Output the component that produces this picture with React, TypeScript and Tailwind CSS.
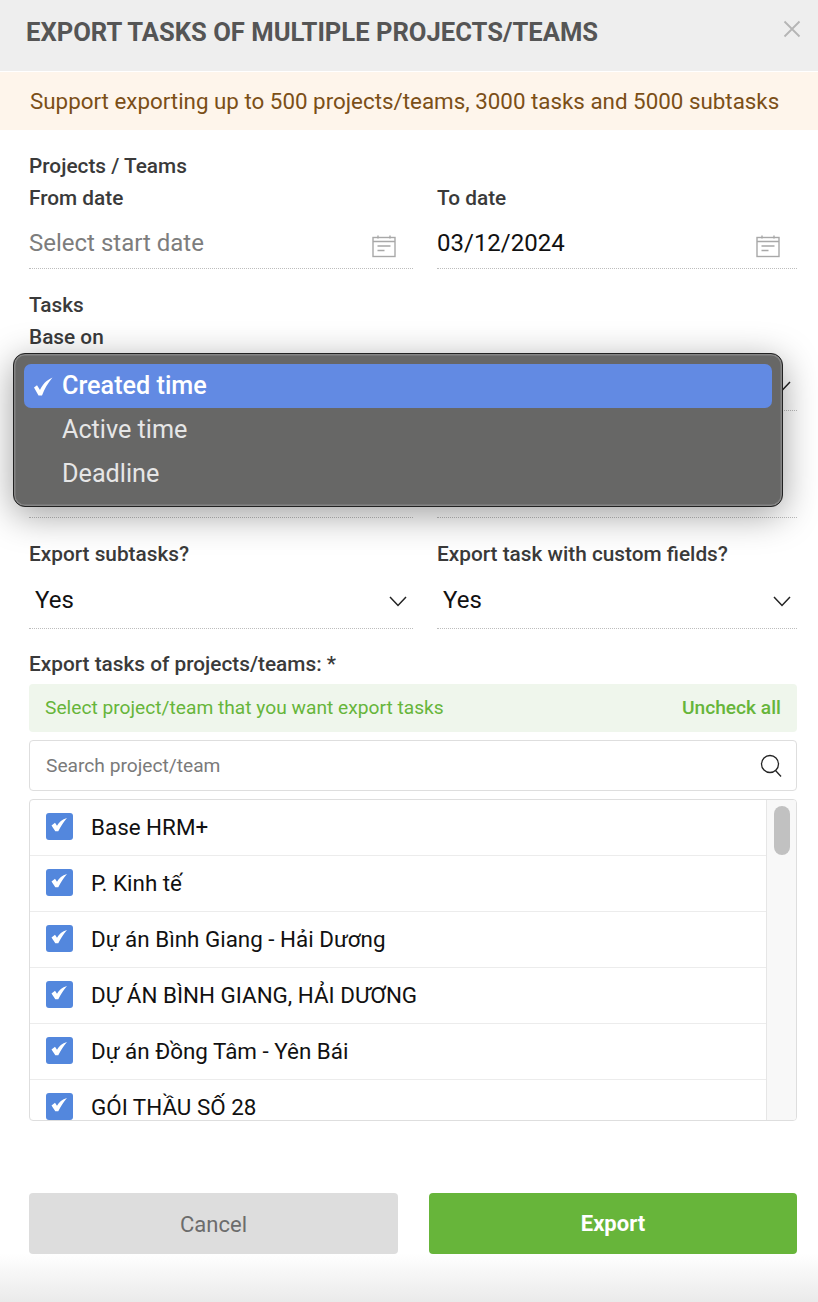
import React from "react";

const font = { fontFamily: "Roboto, 'Noto Sans', sans-serif" };

function CalendarIcon() {
  return (
    <svg width="24" height="24" viewBox="0 0 24 24" fill="none" stroke="#a8a8a8" strokeWidth="1.4" className="shrink-0">
      <rect x="1" y="3.5" width="22" height="19" />
      <path d="M1 7.5h22M6 1.5v3M18 1.5v3M5.5 12h13M5.5 16.5h7" />
    </svg>
  );
}

function Chevron() {
  return (
    <svg width="20" height="12" viewBox="0 0 20 12" fill="none" stroke="#222" strokeWidth="1.5" className="shrink-0">
      <path d="M2 2l8 8.5L18 2" />
    </svg>
  );
}

function Label({ children, className = "" }: { children: React.ReactNode; className?: string }) {
  return <div className={`text-[20.8px] leading-[24px] font-medium text-[#3a3a3a] ${className}`}>{children}</div>;
}

function Underline({ children }: { children?: React.ReactNode }) {
  return (
    <div className="h-[50px] flex items-center justify-between border-b border-dotted border-[#bdbdbd]">
      {children}
    </div>
  );
}

function DateField({ label, value, muted }: { label: string; value: string; muted?: boolean }) {
  return (
    <div>
      <Label>{label}</Label>
      <div className="mt-[8px] h-[51px] flex items-center justify-between border-b border-dotted border-[#bdbdbd]">
        <span className={`text-[24px] ${muted ? "text-[#7d7d7d]" : "text-[#111]"}`}>{value}</span>
        <span className="pr-[17px] pt-[6px]"><CalendarIcon /></span>
      </div>
    </div>
  );
}

function SelectField({ label, value }: { label: string; value: string }) {
  return (
    <div>
      <Label>{label}</Label>
      <div className="mt-[8px] h-[55px] pb-[2px] flex items-center justify-between border-b border-dotted border-[#bdbdbd]">
        <span className="pl-[6px] text-[24px] text-[#111]">{value}</span>
        <span className="pr-[5px] pt-[2px]"><Chevron /></span>
      </div>
    </div>
  );
}

const items = [
  "Base HRM+",
  "P. Kinh tế",
  "Dự án Bình Giang - Hải Dương",
  "DỰ ÁN BÌNH GIANG, HẢI DƯƠNG",
  "Dự án Đồng Tâm - Yên Bái",
  "GÓI THẦU SỐ 28",
];

function Row({ text }: { text: string }) {
  return (
    <div className="h-[56px] shrink-0 flex items-start border-b border-[#ececec] pl-[16px]">
      <div className="mt-[13px] w-[27px] h-[27px] rounded-[3px] bg-[#5387dd] shrink-0">
        <svg width="27" height="27" viewBox="0 0 27 27" fill="#ffffff">
          <path d="M5.5 12.5 L9 9.8 L11 12.8 C13 9 16 6.5 21 5 C17.2 9.5 14.8 13.5 12.3 18.3 L9.3 18.3 Z" />
        </svg>
      </div>
      <span className="ml-[18px] mt-[12px] text-[22.4px] leading-[30px] text-[#111]">{text}</span>
    </div>
  );
}

export default function App() {
  return (
    <div className="w-[818px] h-[1302px] bg-white overflow-hidden relative flex flex-col" style={font}>
      <div className="h-[71px] shrink-0 bg-[#eeeeee] flex items-start justify-between pl-[26px] pr-[17px]">
        <h1 className="mt-[16px] text-[25.6px] leading-[32px] font-bold text-[#555555]">EXPORT TASKS OF MULTIPLE PROJECTS/TEAMS</h1>
        <svg width="18" height="18" viewBox="0 0 18 18" stroke="#b5b5b5" strokeWidth="1.8" className="mt-[20px]">
          <path d="M1.5 1.5l15 15M16.5 1.5l-15 15" />
        </svg>
      </div>
      <div className="mt-[1px] h-[58px] shrink-0 bg-[#fef5eb] flex items-center pl-[30px] pt-[2px] text-[22.36px] text-[#7b4f17]">
        Support exporting up to 500 projects/teams, 3000 tasks and 5000 subtasks
      </div>

      <div className="flex-1 flex flex-col pl-[29px] pr-[21px] relative">
        <Label className="mt-[24px]">Projects / Teams</Label>
        <div className="grid grid-cols-[384px_360px] gap-x-[24px] mt-[8px]">
          <DateField label="From date" value="Select start date" muted />
          <DateField label="To date" value="03/12/2024" />
        </div>

        <Label className="mt-[24px]">Tasks</Label>
        <Label className="mt-[8px]">Base on</Label>
        <div className="mt-[12px]">
          <Underline>
            <span />
            <span className="pr-[5px]"><Chevron /></span>
          </Underline>
        </div>
        <div className="grid grid-cols-[384px_360px] gap-x-[24px] mt-[57px]">
          <Underline />
          <Underline />
        </div>

        <div className="grid grid-cols-[384px_360px] gap-x-[24px] mt-[24px]">
          <SelectField label="Export subtasks?" value="Yes" />
          <SelectField label="Export task with custom fields?" value="Yes" />
        </div>

        <Label className="mt-[23px]">Export tasks of projects/teams: *</Label>
        <div className="mt-[8px] h-[48px] rounded-[4px] bg-[#eff6ec] flex items-center justify-between px-[16px] text-[19.2px] text-[#66b53a]">
          <span>Select project/team that you want export tasks</span>
          <span className="font-medium">Uncheck all</span>
        </div>
        <div className="mt-[8px] h-[51px] rounded-[4px] border border-[#dedede] flex items-center justify-between pl-[16px] pr-[14px]">
          <span className="pt-[1px] text-[19.2px] text-[#7a7a7a]">Search project/team</span>
          <svg width="22" height="24" viewBox="0 0 22 24" fill="none" stroke="#222" strokeWidth="1.3">
            <circle cx="10" cy="10" r="8.5" />
            <path d="M15.5 16.5l5.5 6" />
          </svg>
        </div>
        <div className="mt-[8px] h-[322px] rounded-[4px] border border-[#dedede] flex overflow-hidden">
          <div className="flex-1 flex flex-col overflow-hidden">
            {items.map((t) => (
              <Row key={t} text={t} />
            ))}
          </div>
          <div className="w-[30px] shrink-0 bg-[#f8f8f8] border-l border-[#e6e6e6] pl-[7px] pt-[6px]">
            <div className="w-[16px] h-[49px] rounded-full bg-[#c1c1c1]" />
          </div>
        </div>

        <div className="mt-[72px] grid grid-cols-[369px_368px] gap-x-[31px]">
          <button className="h-[61px] rounded-[4px] bg-[#dddddd] pt-[1px] text-[22px] text-[#6c6c6c]">Cancel</button>
          <button className="h-[61px] rounded-[4px] bg-[#67b53a] text-[22px] font-bold text-white">Export</button>
        </div>
        <div className="absolute left-[13px] top-[223px] w-[770px] h-[154px] rounded-[12px] border border-[#222] bg-[#676766] shadow-[0_8px_36px_rgba(0,0,0,0.38),inset_0_0_0_1.5px_#858585] p-[10px] text-[25.2px]">
          <div className="h-[44px] rounded-[7px] bg-[#628ae3] flex items-center text-white font-medium">
            <svg width="38" height="44" viewBox="0 0 38 44" fill="#ffffff" className="shrink-0">
              <path d="M10 23.5 L13 21.3 L16 26 C18.5 20.5 22 16.5 28.5 13.5 C23.5 19.5 20.5 25 18 31.5 L14.5 31.5 Z" />
            </svg>
            <span>Created time</span>
          </div>
          <div className="h-[44px] flex items-center pl-[38px] text-[#e6e6e6]">Active time</div>
          <div className="h-[44px] flex items-center pl-[38px] text-[#e6e6e6]">Deadline</div>
        </div>
      </div>
      <div className="absolute left-0 right-0 bottom-0 h-[48px] bg-gradient-to-b from-white to-[#eaeaea]" />
    </div>
  );
}
